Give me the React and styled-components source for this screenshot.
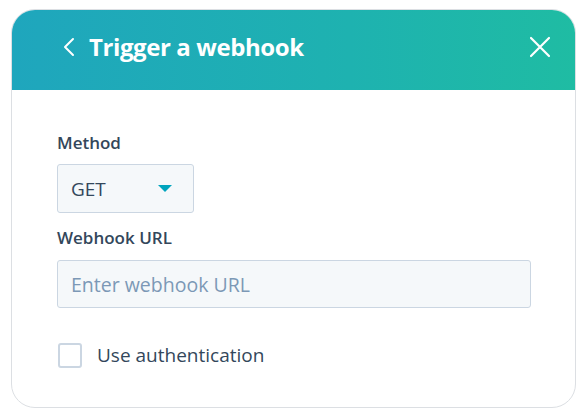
import React, { useState } from 'react';
import styled, { createGlobalStyle } from 'styled-components';

const GlobalStyle = createGlobalStyle`
  body {
    margin: 0;
    background: #ffffff;
    font-family: "Open Sans", "Noto Sans", sans-serif;
  }
`;

const Page = styled.div`
  padding: 9px 10px 10px 11px;
  box-sizing: border-box;
  width: 586px;
  height: 419px;
`;

const Card = styled.div`
  width: 565px;
  height: 399px;
  box-sizing: border-box;
  border: 1px solid #dcdfe3;
  border-radius: 24px;
  overflow: hidden;
  display: flex;
  flex-direction: column;
  background: #ffffff;
`;

const Header = styled.div`
  height: 80px;
  box-sizing: border-box;
  flex-shrink: 0;
  display: flex;
  align-items: center;
  justify-content: space-between;
  padding: 0 24px 7px 50px;
  background: linear-gradient(90deg, #1fa6bd 0%, #1eb2b0 60%, #1fbca3 100%);
  color: #ffffff;
`;

const TitleRow = styled.div`
  display: flex;
  align-items: center;
  gap: 13px;
`;

const Title = styled.h1`
  margin: 0;
  font-size: 24px;
  font-weight: 700;
  letter-spacing: -0.4px;
`;

const IconButton = styled.button`
  border: none;
  background: none;
  padding: 0;
  display: flex;
  align-items: center;
  color: #ffffff;
  cursor: pointer;
`;

const Body = styled.div`
  padding: 42px 45px 0 45px;
  display: flex;
  flex-direction: column;
`;

const Label = styled.label`
  display: block;
  font-size: 17px;
  font-weight: 600;
  line-height: 22px;
  color: #33475b;
  margin-bottom: ${props => props.gap || 10}px;
`;

const Select = styled.div`
  width: 137px;
  height: 49px;
  box-sizing: border-box;
  border: 1px solid #cbd6e2;
  border-radius: 3px;
  background: #f5f8fa;
  display: flex;
  align-items: center;
  justify-content: space-between;
  padding: 0 21px 0 13px;
  font-size: 19px;
  color: #33475b;
  margin-bottom: 14px;
`;

const Caret = styled.span`
  width: 0;
  height: 0;
  border-left: 7px solid transparent;
  border-right: 7px solid transparent;
  border-top: 7px solid #00a4bd;
`;

const Input = styled.input`
  width: 474px;
  height: 48px;
  box-sizing: border-box;
  border: 1px solid #cbd6e2;
  border-radius: 3px;
  background: #f5f8fa;
  padding: 0 13px;
  font-family: inherit;
  font-size: 19.5px;
  color: #33475b;
  outline: none;

  &::placeholder {
    color: #7c98b6;
  }
`;

const CheckRow = styled.label`
  display: flex;
  align-items: center;
  gap: 15px;
  margin-top: 34px;
  font-size: 19px;
  color: #33475b;
  cursor: pointer;
`;

const Box = styled.span`
  width: 24px;
  height: 25px;
  box-sizing: border-box;
  border: 2px solid #cbd6e2;
  border-radius: 3px;
  background: ${props => (props.checked ? '#00a4bd' : '#ffffff')};
  margin-left: 1px;
`;

export default function App() {
  const [url, setUrl] = useState('');
  const [auth, setAuth] = useState(false);

  return (
    <Page>
      <GlobalStyle />
      <Card>
        <Header>
          <TitleRow>
            <IconButton aria-label="Back">
              <svg width="14" height="20" viewBox="0 0 14 20" fill="none">
                <path d="M11 2 L3 10 L11 18" stroke="#fff" strokeWidth="2" strokeLinecap="round" strokeLinejoin="round" />
              </svg>
            </IconButton>
            <Title>Trigger a webhook</Title>
          </TitleRow>
          <IconButton aria-label="Close">
            <svg width="22" height="22" viewBox="0 0 22 22" fill="none">
              <path d="M2 2 L20 20 M20 2 L2 20" stroke="#fff" strokeWidth="2.2" strokeLinecap="round" />
            </svg>
          </IconButton>
        </Header>
        <Body>
          <Label>Method</Label>
          <Select>
            GET
            <Caret />
          </Select>
          <Label gap={11}>Webhook URL</Label>
          <Input
            placeholder="Enter webhook URL"
            value={url}
            onChange={e => setUrl(e.target.value)}
          />
          <CheckRow onClick={() => setAuth(!auth)}>
            <Box checked={auth} />
            Use authentication
          </CheckRow>
        </Body>
      </Card>
    </Page>
  );
}
